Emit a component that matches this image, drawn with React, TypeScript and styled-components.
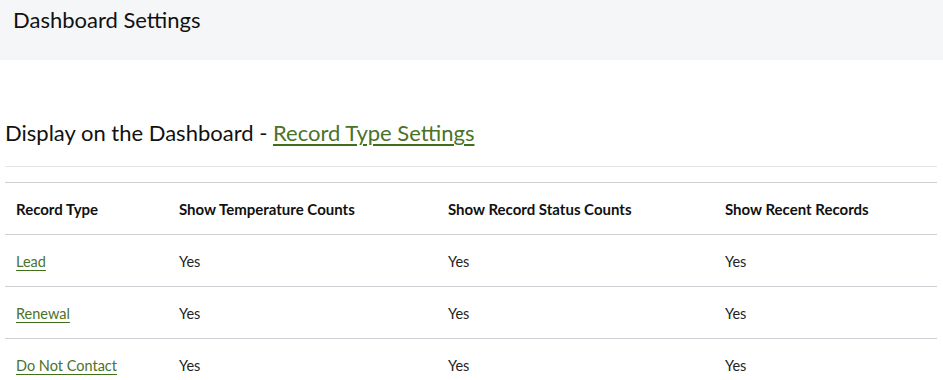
import React from "react";
import styled, { createGlobalStyle } from "styled-components";

const Global = createGlobalStyle`
  html, body { margin: 0; padding: 0; background: #fff; }
  body { font-family: Lato, "Open Sans", sans-serif; color: #1a1a1a; }
`;

const Page = styled.div`
  width: 943px;
`;

const TopBar = styled.header`
  height: 60px;
  background: #f5f6f8;
  padding: 8px 13px 0;
  box-sizing: border-box;
`;

const PageTitle = styled.h1`
  margin: 0;
  font-size: 22px;
  font-weight: 400;
  line-height: 24px;
  color: #111;
`;

const Content = styled.main`
  padding: 58px 6px 0 5px;
`;

const SectionTitle = styled.h2`
  margin: 0;
  font-size: 22px;
  font-weight: 400;
  line-height: 30px;
  color: #111;
  padding-bottom: 18px;
  border-bottom: 1px solid #e3e4e6;
`;

const Link = styled.a`
  color: #4a7328;
  text-decoration: underline;
  text-decoration-color: #3f6f1c;
  text-underline-offset: 3px;
  cursor: pointer;
`;

const Table = styled.table`
  margin-top: 15px;
  width: 932px;
  table-layout: fixed;
  border-collapse: collapse;
  border-top: 1px solid #cdd0d4;
  font-size: 14.5px;
`;

const Th = styled.th<{ $w: number }>`
  width: ${(p) => p.$w}px;
  text-align: left;
  font-weight: 700;
  font-size: 15px;
  height: 52px;
  padding: 0 11px;
  border-bottom: 1px solid #cdd0d4;
  color: #111;
  box-sizing: border-box;
`;

const Td = styled.td`
  height: 52px;
  padding: 2px 11px 0;
  border-bottom: 1px solid #cdd0d4;
  color: #222;
  box-sizing: border-box;
`;

const widths = [163, 269, 277, 223];
const headers = [
  "Record Type",
  "Show Temperature Counts",
  "Show Record Status Counts",
  "Show Recent Records",
];
const rows = ["Lead", "Renewal", "Do Not Contact"];

export default function App() {
  return (
    <Page>
      <Global />
      <TopBar>
        <PageTitle>Dashboard Settings</PageTitle>
      </TopBar>
      <Content>
        <SectionTitle>
          Display on the Dashboard - <Link>Record Type Settings</Link>
        </SectionTitle>
        <Table>
          <thead>
            <tr>
              {headers.map((h, i) => (
                <Th key={h} $w={widths[i]}>
                  {h}
                </Th>
              ))}
            </tr>
          </thead>
          <tbody>
            {rows.map((r) => (
              <tr key={r}>
                <Td>
                  <Link>{r}</Link>
                </Td>
                <Td>Yes</Td>
                <Td>Yes</Td>
                <Td>Yes</Td>
              </tr>
            ))}
          </tbody>
        </Table>
      </Content>
    </Page>
  );
}
